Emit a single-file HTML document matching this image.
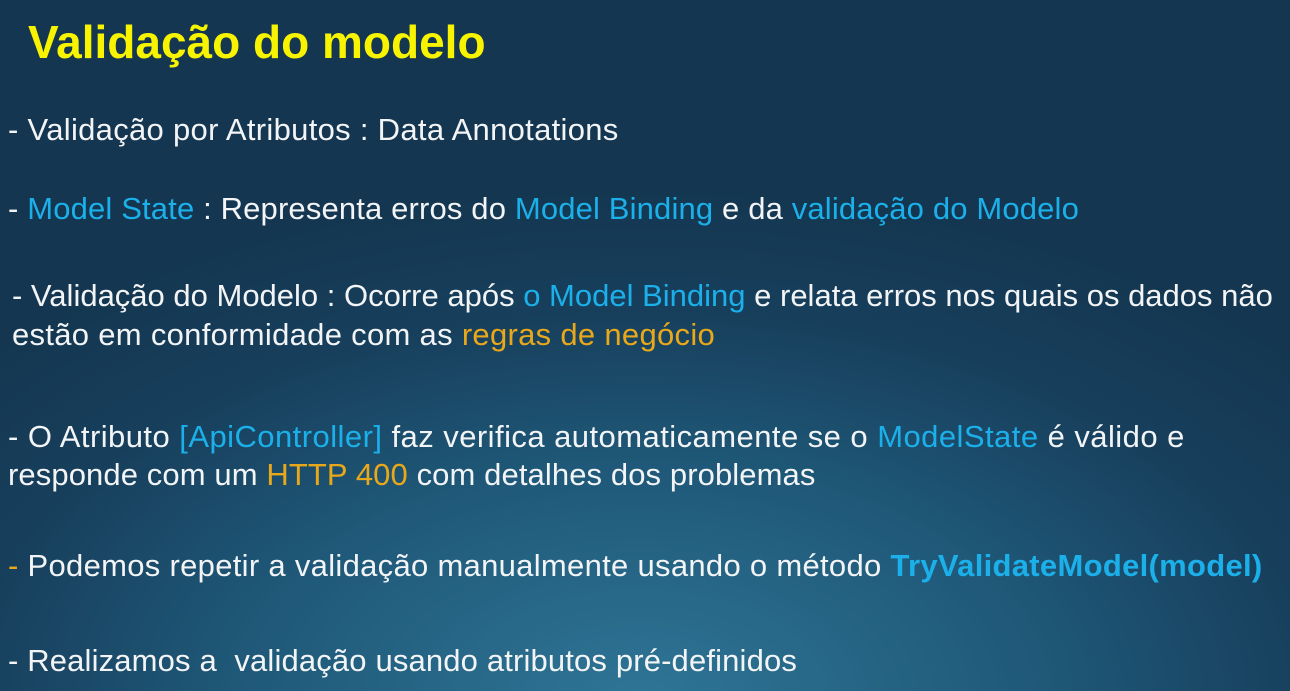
<!DOCTYPE html>
<html><head><meta charset="utf-8"><style>
html,body{margin:0;padding:0}
body{width:1290px;height:691px;overflow:hidden;position:relative;
background:radial-gradient(ellipse 900px 520px at 640px 700px,#2f7596 0%,#1f5878 45%,#173f5c 75%,#143650 100%);
font-family:"Liberation Sans",sans-serif;color:#f2f4f6}
.t{position:absolute;white-space:nowrap;font-size:31px;line-height:36px;letter-spacing:0.3px}
.c{color:#1cb0ea}.o{color:#e8a81a}
h1{position:absolute;left:28px;top:14px;margin:0;font-size:46px;line-height:56px;color:#f8f400;font-weight:bold}
</style></head><body>
<h1>Validação do modelo</h1>
<div class="t" style="left:8px;top:112px">- Validação por Atributos : Data Annotations</div>
<div class="t" style="left:8px;top:191px;letter-spacing:0.15px">- <span class="c">Model State</span> : Representa erros do <span class="c">Model Binding</span> e da <span class="c">validação do Modelo</span></div>
<div class="t" style="left:12px;top:278px;letter-spacing:0">- Validação do Modelo : Ocorre após <span class="c">o Model Binding</span> e relata erros nos quais os dados não</div>
<div class="t" style="left:12px;top:317px">estão em conformidade com as <span class="o">regras de negócio</span></div>
<div class="t" style="left:8px;top:419px;letter-spacing:0.45px">- O Atributo <span class="c">[ApiController]</span> faz verifica automaticamente se o <span class="c">ModelState</span> é válido e</div>
<div class="t" style="left:8px;top:457px;letter-spacing:0.1px">responde com um <span class="o">HTTP 400</span> com detalhes dos problemas</div>
<div class="t" style="left:8px;top:548px;letter-spacing:0.3px"><span class="o">-</span> Podemos repetir a validação manualmente usando o método <b class="c">TryValidateModel(model)</b></div>
<div class="t" style="left:8px;top:643px;letter-spacing:0.15px">- Realizamos a&nbsp; validação usando atributos pré-definidos</div>
</body></html>
